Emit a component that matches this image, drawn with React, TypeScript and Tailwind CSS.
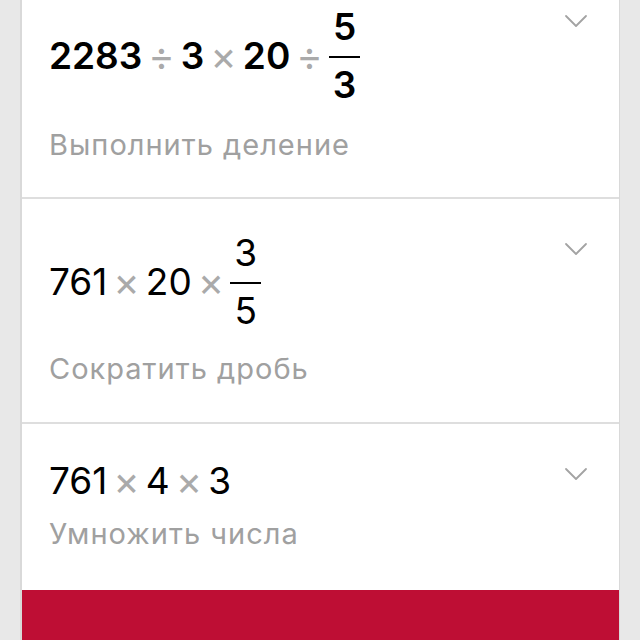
import React from 'react';

type Part = { t: 'n'; v: string } | { t: 'op'; v: string } | { t: 'frac'; num: string; den: string };

interface Step {
  parts: Part[];
  label: string;
  bold?: boolean;
  padClass: string;
  labelClass: string;
  divider?: boolean;
}

const steps: Step[] = [
  {
    parts: [
      { t: 'n', v: '2283' },
      { t: 'op', v: '÷' },
      { t: 'n', v: '3' },
      { t: 'op', v: '×' },
      { t: 'n', v: '20' },
      { t: 'op', v: '÷' },
      { t: 'frac', num: '5', den: '3' },
    ],
    label: 'Выполнить деление',
    bold: true,
    padClass: 'pt-[36px] pb-[36px]',
    labelClass: 'mt-[24px]',
    divider: true,
  },
  {
    parts: [
      { t: 'n', v: '761' },
      { t: 'op', v: '×' },
      { t: 'n', v: '20' },
      { t: 'op', v: '×' },
      { t: 'frac', num: '3', den: '5' },
    ],
    label: 'Сократить дробь',
    padClass: 'pt-[34px] pb-[37px]',
    labelClass: 'mt-[22px]',
    divider: true,
  },
  {
    parts: [
      { t: 'n', v: '761' },
      { t: 'op', v: '×' },
      { t: 'n', v: '4' },
      { t: 'op', v: '×' },
      { t: 'n', v: '3' },
    ],
    label: 'Умножить числа',
    padClass: 'pt-[34px] pb-[40px]',
    labelClass: 'mt-[14px]',
  },
];

const Chevron = () => (
  <svg width="24" height="14" viewBox="0 0 24 14" fill="none" className="mt-[43px] mr-[31px] shrink-0">
    <path d="M2 2 L12 12 L22 2" stroke="#a3a3a3" strokeWidth="1.8" strokeLinecap="round" strokeLinejoin="round" />
  </svg>
);

const Expression = ({ parts, bold }: { parts: Part[]; bold?: boolean }) => (
  <div className={`flex items-center text-[37px] leading-[46px] text-black ${bold ? 'font-semibold' : 'font-normal'}`}>
    {parts.map((p, i) => {
      if (p.t === 'n') return <span key={i}>{p.v}</span>;
      if (p.t === 'op')
        return (
          <span key={i} className="mx-[6px] text-[40px] leading-[46px] font-normal text-[#aaaaaa]">
            {p.v}
          </span>
        );
      return (
        <div key={i} className="flex flex-col items-stretch">
          <span className="px-[4px] text-center leading-[40px]">{p.num}</span>
          <div className="mt-[9px] mb-[7px] h-[2px] bg-black" />
          <span className="px-[4px] text-center leading-[40px]">{p.den}</span>
        </div>
      );
    })}
  </div>
);

export default function App() {
  return (
    <div className="h-[640px] overflow-hidden bg-[#e8e8e8] font-['Inter','Noto_Sans',sans-serif]">
      <div className="ml-[20px] w-[600px] bg-white border-l-2 border-r border-[#d9d9d9] -mt-[29px]">
        {steps.map((s, i) => (
          <div key={i} className={`flex items-start ${s.divider ? 'border-b-2 border-[#dedede]' : ''}`}>
            <div className={`flex-1 pl-[27px] ${s.padClass}`}>
              <Expression parts={s.parts} bold={s.bold} />
              <div className={`${s.labelClass} text-[29px] leading-[32px] tracking-[1px] text-[#a0a0a0]`}>{s.label}</div>
            </div>
            <Chevron />
          </div>
        ))}
        <div className="h-[60px] bg-[#be0e34]" />
      </div>
    </div>
  );
}
